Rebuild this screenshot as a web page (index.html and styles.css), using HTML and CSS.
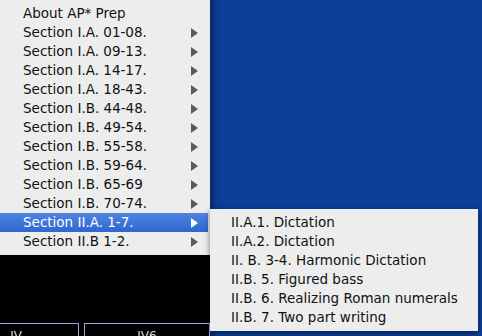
FILE: index.html
```html
<!DOCTYPE html>
<html lang="en">
  <head>
    <meta charset="UTF-8" />
    <meta name="viewport" content="width=device-width, initial-scale=1.0" />
    <title>AP* Prep</title>
    <link rel="stylesheet" href="styles.css">
  </head>
  <body>
    <div class="screen">
      <div class="left">
        <ul class="menu">
          <li class="item">About AP* Prep</li>
          <li class="item sub">Section I.A. 01-08.</li>
          <li class="item sub">Section I.A. 09-13.</li>
          <li class="item sub">Section I.A. 14-17.</li>
          <li class="item sub">Section I.A. 18-43.</li>
          <li class="item sub">Section I.B. 44-48.</li>
          <li class="item sub">Section I.B. 49-54.</li>
          <li class="item sub">Section I.B. 55-58.</li>
          <li class="item sub">Section I.B. 59-64.</li>
          <li class="item sub">Section I.B. 65-69</li>
          <li class="item sub">Section I.B. 70-74.</li>
          <li class="item sub active">
            Section II.A. 1-7.
            <ul class="menu flyout">
              <li class="item">II.A.1. Dictation</li>
              <li class="item">II.A.2. Dictation</li>
              <li class="item">II. B. 3-4. Harmonic Dictation</li>
              <li class="item">II.B. 5. Figured bass</li>
              <li class="item">II.B. 6. Realizing Roman numerals</li>
              <li class="item">II.B. 7. Two part writing</li>
            </ul>
          </li>
          <li class="item sub">Section II.B 1-2.</li>
        </ul>
        <div class="window">
          <div class="chords">
            <div class="chord">IV</div>
            <div class="chord">IV6</div>
          </div>
        </div>
      </div>
      <div class="desktop"></div>
    </div>
  </body>
</html>
```
FILE: styles.css
```css
body {
  margin: 0;
  font-family: "DejaVu Sans", Verdana, sans-serif;
  font-size: 13.5px;
  background-color: #0d3e98;
  overflow: hidden;
}
.screen {
  display: flex;
  width: 482px;
  height: 336px;
}
.left {
  width: 210px;
  display: flex;
  flex-direction: column;
  position: relative;
  z-index: 2;
}
.desktop {
  flex: 1;
  background-color: #0d3e98;
  background-image: linear-gradient(90deg, rgba(0, 0, 0, 0.35), rgba(0, 0, 0, 0) 8px);
}
.menu {
  list-style: none;
  margin: 0;
  padding: 4px 0;
  background-color: #ededed;
  color: #111;
}
.item {
  height: 19px;
  line-height: 19px;
  padding-left: 23px;
  position: relative;
  white-space: nowrap;
}
.sub::after {
  content: '';
  position: absolute;
  right: 12px;
  top: 5px;
  border-left: 7px solid #5a5a5a;
  border-top: 5px solid transparent;
  border-bottom: 5px solid transparent;
}
.active {
  background: linear-gradient(#4f85e0, #2f66d0);
  color: #fff;
  margin-right: 2px;
}
.active::after {
  border-left-color: #fff;
  right: 10px;
}
.flyout {
  position: absolute;
  left: 210px;
  top: -4px;
  width: 268px;
  box-shadow: 0 2px 6px rgba(0, 0, 0, 0.5);
}
.flyout .item {
  padding-left: 21px;
}
.window {
  flex: 1;
  background-color: #000;
  display: flex;
  flex-direction: column;
  justify-content: flex-end;
}
.chords {
  display: flex;
  gap: 5px;
  margin-left: -47px;
  height: 13px;
}
.chord {
  width: 124px;
  flex-shrink: 0;
  border: 1px solid #a4a4dc;
  border-bottom: none;
  color: #ddd;
  font-size: 12px;
  line-height: 24px;
  text-align: center;
  overflow: hidden;
}
```
